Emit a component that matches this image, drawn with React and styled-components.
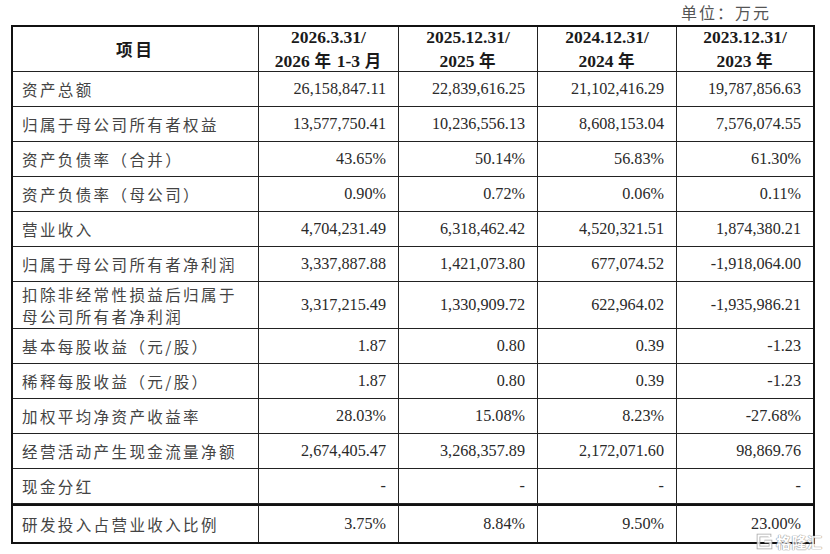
import React from "react";
import styled, { createGlobalStyle } from "styled-components";

const Global = createGlobalStyle`
  html, body { margin: 0; padding: 0; background: #fff; }
  body { font-family: "Liberation Serif", "Noto Sans CJK SC", serif; }
`;

const Page = styled.div`
  position: relative;
  width: 830px;
  height: 554px;
  overflow: hidden;
  background: #fff;
`;

const UnitLine = styled.div`
  height: 25px;
  display: flex;
  justify-content: flex-end;
  align-items: center;
  padding-right: 59px;
  box-sizing: border-box;
  font-family: "Noto Sans CJK SC", sans-serif;
  font-size: 16px;
  letter-spacing: 2px;
  color: #555;
  line-height: 1;
  padding-bottom: 2px;
`;

const Frame = styled.div`
  margin-left: 11px;
  width: 804px;
  box-sizing: border-box;
  border: 2px solid #111;
  display: grid;
  grid-template-columns: 246px 140px 139px 139px 1fr;
`;

const Cell = styled.div`
  box-sizing: border-box;
  height: ${(p) => p.$h}px;
  border-right: ${(p) => (p.$last ? "none" : "1px solid #222")};
  border-bottom: ${(p) => (p.$bottom ? "none" : "1px solid #222")};
  border-top: ${(p) => (p.$split ? "2px solid #111" : "none")};
  display: flex;
  align-items: center;
  justify-content: ${(p) => (p.$label ? "flex-start" : "flex-end")};
  padding: ${(p) => (p.$label ? "0 0 0 9px" : "0 12px 0 0")};
  font-size: 16px;
  color: #333;
  white-space: nowrap;
`;

const Label = styled.span`
  font-family: "Noto Sans CJK SC", sans-serif;
  font-size: 15.5px;
  letter-spacing: 2.4px;
  line-height: 22px;
  color: #444;
`;

const Num = styled.span`
  font-family: "Liberation Serif", serif;
  font-size: 16.2px;
  color: #2a2a2a;
`;

const HeadCell = styled.div`
  box-sizing: border-box;
  height: 45px;
  border-right: ${(p) => (p.$last ? "none" : "1px solid #222")};
  border-bottom: 1px solid #222;
  display: flex;
  flex-direction: column;
  align-items: center;
  justify-content: center;
  font-family: "Liberation Serif", "Noto Sans CJK SC", serif;
  font-weight: bold;
  font-size: 17.5px;
  line-height: 23px;
  color: #1a1a1a;
`;

const HeadCjk = styled.span`
  font-family: "Noto Sans CJK SC", sans-serif;
  font-weight: bold;
  font-size: 16.5px;
  letter-spacing: ${(p) => (p.$wide ? "3px" : "1px")};
`;

const Watermark = styled.div`
  position: absolute;
  left: 756px;
  top: 531px;
  display: flex;
  align-items: center;
  gap: 3px;
  opacity: 0.85;
`;

const WmText = styled.span`
  font-family: "Noto Sans CJK SC", sans-serif;
  font-weight: bold;
  font-size: 15px;
  letter-spacing: 0.5px;
  color: #fff;
  text-shadow: 0 0 1px #888, 0 0 1px #888, 0 0 1px #888;
`;

const headers = [
  ["2026.3.31/", "2026", " 年 ", "1-3", " 月"],
  ["2025.12.31/", "2025", " 年"],
  ["2024.12.31/", "2024", " 年"],
  ["2023.12.31/", "2023", " 年"],
];

const rows = [
  { label: ["资产总额"], v: ["26,158,847.11", "22,839,616.25", "21,102,416.29", "19,787,856.63"] },
  { label: ["归属于母公司所有者权益"], v: ["13,577,750.41", "10,236,556.13", "8,608,153.04", "7,576,074.55"] },
  { label: ["资产负债率（合并）"], v: ["43.65%", "50.14%", "56.83%", "61.30%"] },
  { label: ["资产负债率（母公司）"], v: ["0.90%", "0.72%", "0.06%", "0.11%"] },
  { label: ["营业收入"], v: ["4,704,231.49", "6,318,462.42", "4,520,321.51", "1,874,380.21"] },
  { label: ["归属于母公司所有者净利润"], v: ["3,337,887.88", "1,421,073.80", "677,074.52", "-1,918,064.00"] },
  { label: ["扣除非经常性损益后归属于", "母公司所有者净利润"], v: ["3,317,215.49", "1,330,909.72", "622,964.02", "-1,935,986.21"], h: 47 },
  { label: ["基本每股收益（元/股）"], v: ["1.87", "0.80", "0.39", "-1.23"] },
  { label: ["稀释每股收益（元/股）"], v: ["1.87", "0.80", "0.39", "-1.23"] },
  { label: ["加权平均净资产收益率"], v: ["28.03%", "15.08%", "8.23%", "-27.68%"] },
  { label: ["经营活动产生现金流量净额"], v: ["2,674,405.47", "3,268,357.89", "2,172,071.60", "98,869.76"] },
  { label: ["现金分红"], v: ["-", "-", "-", "-"] },
  { label: ["研发投入占营业收入比例"], v: ["3.75%", "8.84%", "9.50%", "23.00%"], h: 38, split: true, bottom: true },
];

export default function App() {
  return (
    <Page>
      <Global />
      <UnitLine>单位：万元</UnitLine>
      <Frame>
        <HeadCell>
          <HeadCjk $wide>项目</HeadCjk>
        </HeadCell>
        {headers.map((h, i) => (
          <HeadCell key={i} $last={i === headers.length - 1}>
            <span>{h[0]}</span>
            <span>
              {h[1]}
              <HeadCjk>{h[2]}</HeadCjk>
              {h[3]}
              {h[4] ? <HeadCjk>{h[4]}</HeadCjk> : null}
            </span>
          </HeadCell>
        ))}
        {rows.map((r, ri) => (
          <React.Fragment key={ri}>
            <Cell $label $h={r.h || 35} $split={r.split} $bottom={r.bottom}>
              <Label>
                {r.label.map((l, li) => (
                  <React.Fragment key={li}>
                    {li > 0 && <br />}
                    {l}
                  </React.Fragment>
                ))}
              </Label>
            </Cell>
            {r.v.map((v, vi) => (
              <Cell key={vi} $h={r.h || 35} $last={vi === 3} $split={r.split} $bottom={r.bottom}>
                <Num>{v}</Num>
              </Cell>
            ))}
          </React.Fragment>
        ))}
      </Frame>
      <Watermark>
        <svg width="17" height="17" viewBox="0 0 17 17">
          <path
            d="M13.5 4 V2.5 H2.5 V14.5 H14.5 V8.5 H8.5"
            fill="none"
            stroke="#999"
            strokeWidth="3.6"
          />
          <path
            d="M13.5 4 V2.5 H2.5 V14.5 H14.5 V8.5 H8.5"
            fill="none"
            stroke="#fff"
            strokeWidth="2"
          />
        </svg>
        <WmText>格隆汇</WmText>
      </Watermark>
    </Page>
  );
}
